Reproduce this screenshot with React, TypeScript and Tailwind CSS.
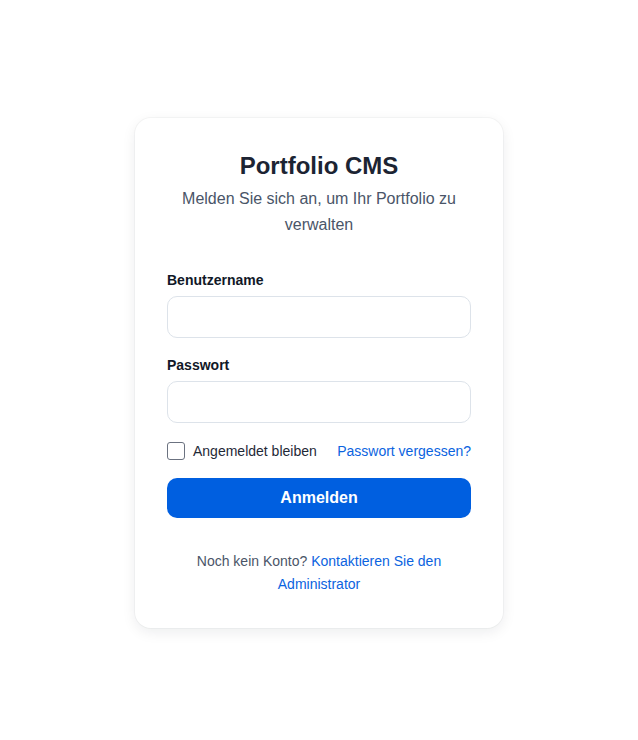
import React, { useState } from "react";

export default function App() {
  const [username, setUsername] = useState("");
  const [password, setPassword] = useState("");
  const [remember, setRemember] = useState(false);

  return (
    <div className="min-h-screen flex items-center justify-center bg-white pt-[6px] font-['Liberation_Sans',Arial,sans-serif]">
      <div className="w-[368px] bg-white rounded-2xl shadow-[0_0_0_1px_rgba(15,23,42,0.03),0_4px_14px_rgba(15,23,42,0.08)] px-8 pt-8 pb-8">
        <h1 className="text-2xl leading-8 font-bold text-center text-[#1c2433]">Portfolio CMS</h1>
        <p className="mt-1 text-base leading-[26px] text-center text-[#4a5568]">
          Melden Sie sich an, um Ihr Portfolio zu verwalten
        </p>

        <form onSubmit={(e) => e.preventDefault()} className="mt-8 flex flex-col">
          <label className="text-sm leading-5 font-bold text-[#111827] mb-1.5">Benutzername</label>
          <input
            value={username}
            onChange={(e) => setUsername(e.target.value)}
            className="h-[42px] px-3 rounded-[10px] border border-[#dde3ea] outline-none text-sm"
          />
          <label className="mt-[17px] text-sm leading-5 font-bold text-[#111827] mb-1.5">Passwort</label>
          <input
            type="password"
            value={password}
            onChange={(e) => setPassword(e.target.value)}
            className="h-[42px] px-3 rounded-[10px] border border-[#dde3ea] outline-none text-sm"
          />

          <div className="mt-4 h-6 flex items-center justify-between">
            <label className="flex items-center gap-2 text-sm text-[#1f2937]">
              <input
                type="checkbox"
                checked={remember}
                onChange={(e) => setRemember(e.target.checked)}
                className="appearance-none w-[18px] h-[18px] rounded-[3px] border border-[#6b7280] bg-white"
              />
              Angemeldet bleiben
            </label>
            <a href="#" className="text-sm text-[#0b63e0]">Passwort vergessen?</a>
          </div>

          <button className="mt-[15px] h-10 rounded-[10px] bg-[#005fe0] text-white font-bold text-base">
            Anmelden
          </button>
        </form>

        <p className="mt-8 text-sm leading-[23px] text-center text-[#4a5568]">
          Noch kein Konto? <a href="#" className="text-[#0b63e0]">Kontaktieren Sie den Administrator</a>
        </p>
      </div>
    </div>
  );
}
